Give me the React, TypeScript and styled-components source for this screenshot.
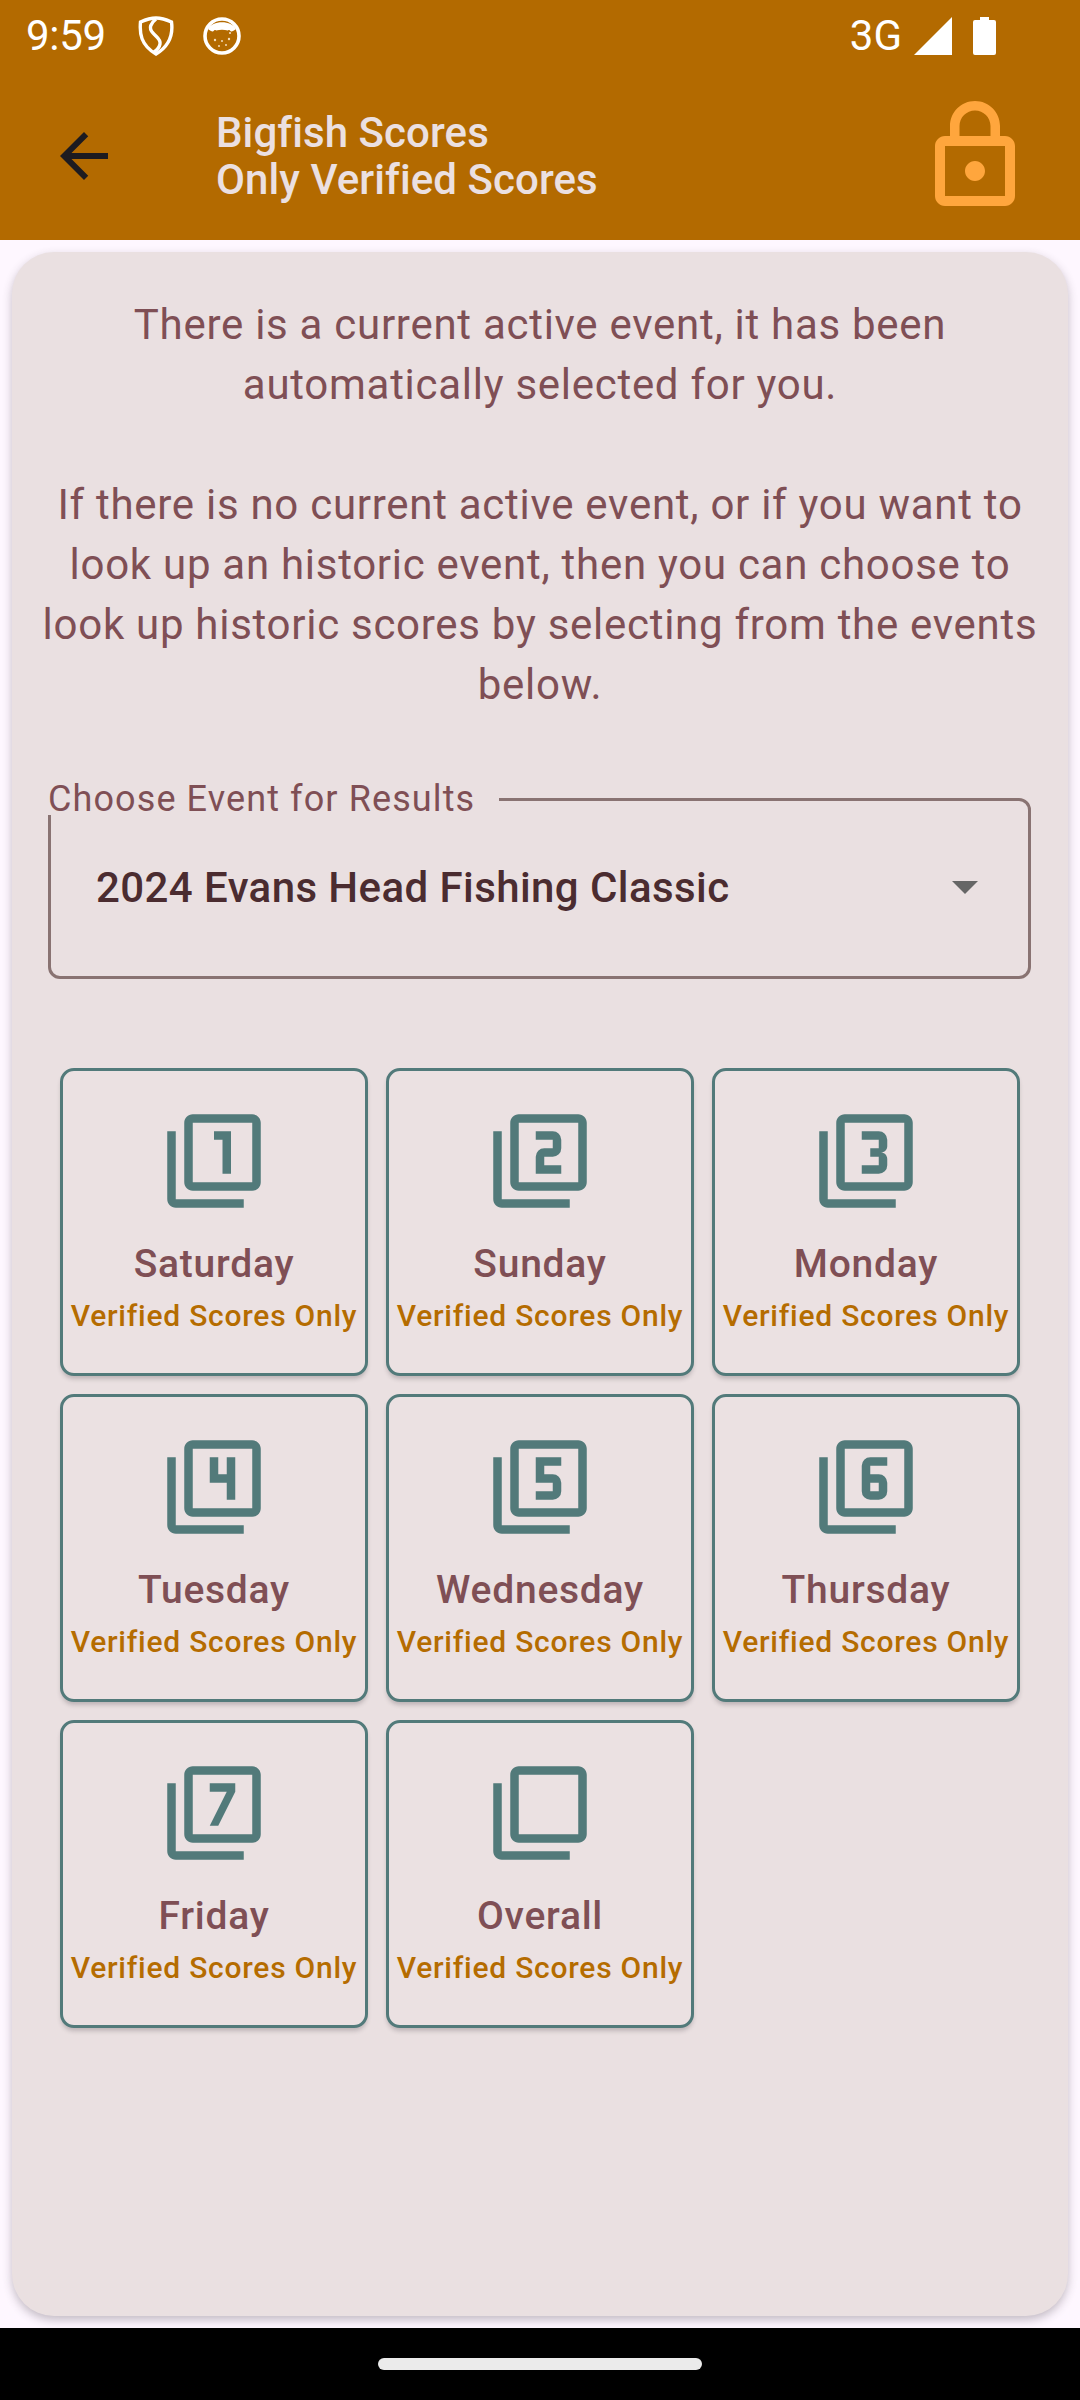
import React from 'react';
import styled, { createGlobalStyle } from 'styled-components';
import { MdArrowBack, MdLockOutline, MdFilter1, MdFilter2, MdFilter3, MdFilter4, MdFilter5, MdFilter6, MdFilter7, MdFilterNone } from 'react-icons/md';

const Global = createGlobalStyle`
  html, body { margin: 0; padding: 0; background: #FEF7FF; }
  * { box-sizing: border-box; }
`;

const Screen = styled.div`
  width: 1080px; height: 2400px; display: flex; flex-direction: column;
  font-family: Roboto, "Noto Sans", sans-serif; background: #FEF7FF; overflow: hidden;
`;
const StatusBar = styled.div`
  height: 72px; background: #B36A00; color: #fff; display: flex; align-items: center;
  padding: 0 84px 0 26px; font-size: 42px; line-height: 72px;
`;
const StatusTime = styled.span` width: 112px; letter-spacing: -0.3px; `;
const StatusGroup = styled.div` display: flex; align-items: center; gap: 29px; flex: 1; `;
const StatusRight = styled.div` display: flex; align-items: center; gap: 12px; `;
const BatteryShape = styled.svg` margin-left: 9px; `;
const AppBar = styled.div`
  height: 168px; background: #B36A00; display: flex; align-items: center; padding: 0 45px 0 48px;
`;
const BackButton = styled.div` width: 72px; height: 72px; color: #1D1B20; display: flex; flex: none; `;
const Titles = styled.div`
  flex: 1; margin-left: 96px; color: #EBE0E1; font-size: 42px; font-weight: 500; line-height: 47px; letter-spacing: 0.08px;
`;
const LockButton = styled.div` width: 120px; height: 120px; color: #FFA63D; display: flex; flex: none; `;
const Main = styled.div` flex: 1; padding: 12px; display: flex; `;
const Panel = styled.div`
  flex: 1; background: #EAE0E1; border-radius: 42px; padding: 43px 24px 0;
  box-shadow: 0 4px 10px rgba(60, 50, 60, 0.3);
`;
const Intro = styled.p`
  margin: 0 0 60px; text-align: center; color: #7F4F55; font-size: 42px; line-height: 60px;
  letter-spacing: 0.72px;
`;
const Field = styled.div`
  position: relative; height: 181px; margin: 83px 13px 0 12px; border: 3px solid #897372; border-radius: 12px;
  display: flex; align-items: center; padding: 0 50px 2px 45px;
`;
const FieldLabel = styled.span`
  position: absolute; left: -3px; top: -16px; width: 451px; height: 30px; background: #EAE0E1;
  color: #7F4F55; font-size: 36px; line-height: 28px; letter-spacing: 1.1px; white-space: nowrap;
`;
const FieldValue = styled.span`
  flex: 1; color: #4B2C30; font-size: 42px; font-weight: 500; letter-spacing: 0.42px;
`;
const Caret = styled.span`
  width: 0; height: 0; border-left: 13px solid transparent; border-right: 13px solid transparent;
  border-top: 13px solid #666;
`;
const Grid = styled.div`
  display: grid; grid-template-columns: repeat(3, 308px); grid-auto-rows: 308px; gap: 18px;
  margin: 89px 0 0 24px;
`;
const DayCard = styled.div`
  background: #EBE1E2; border: 3px solid #527A7A; border-radius: 14px; padding-top: 39px;
  display: flex; flex-direction: column; align-items: center;
  box-shadow: 0 4px 4px -1px rgba(60, 50, 60, 0.25);
`;
const DayIcon = styled.div` width: 102px; height: 102px; color: #527A7A; display: flex; `;
const DayName = styled.div`
  margin-top: 30px; color: #7F4F55; font-size: 39px; font-weight: 500; line-height: 44px; letter-spacing: 0.75px;
`;
const DayNote = styled.div`
  margin-top: 12px; color: #B56C00; font-size: 30px; font-weight: 500; line-height: 36px; letter-spacing: 0.75px;
  white-space: nowrap;
`;
const NavBar = styled.div` height: 72px; background: #000; display: flex; justify-content: center; padding-top: 30px; `;
const HomePill = styled.div` width: 324px; height: 12px; border-radius: 6px; background: #EBEBEB; `;

const days = [
  ['Saturday', MdFilter1], ['Sunday', MdFilter2], ['Monday', MdFilter3], ['Tuesday', MdFilter4],
  ['Wednesday', MdFilter5], ['Thursday', MdFilter6], ['Friday', MdFilter7], ['Overall', MdFilterNone],
] as const;

const Shield = () => (
  <svg width="36" height="40" viewBox="0 0 36 40" fill="none" stroke="#fff" strokeWidth="3.4">
    <path d="M18 2C13 2 8 3.500 2.500 6c-1 11 0 23 15.500 32C33 29 35 17 33.500 6 28 3.500 23 2 18 2z" />
    <path d="M18 3c-5 4-8 9-3 14 3 4 8 6 7 11-.5 3-3 6-6 8" />
  </svg>
);
const Bubble = () => (
  <svg width="38" height="38" viewBox="0 0 38 38">
    <circle cx="19" cy="19" r="17" fill="none" stroke="#fff" strokeWidth="3.6" />
    <path d="M5 12C9 3 29 3 33 12c-2 1.500-4 3-5 2.500-1-1-2-2-3-1-4-1-8-1-12 0-1-1-2 0-3 1-1 .5-3-1-5-2.500z" fill="#fff" />
    <g fill="#F3DDBB">
      <circle cx="12" cy="23" r="1.200" /><circle cx="19" cy="24" r="1" /><circle cx="26" cy="22" r="1.200" />
      <circle cx="16" cy="29" r="1" /><circle cx="23" cy="28" r="1" /><circle cx="27" cy="16" r="1.100" />
    </g>
  </svg>
);
const Signal = () => (
  <svg width="38" height="38" viewBox="0 0 38 38"><path d="M38 0v38H0z" fill="#fff" /></svg>
);
const Battery = () => (
  <BatteryShape width="23" height="38" viewBox="0 0 23 38">
    <path d="M7 0h9v3h5a2 2 0 0 1 2 2v31a2 2 0 0 1-2 2H2a2 2 0 0 1-2-2V5a2 2 0 0 1 2-2h5z" fill="#fff" />
  </BatteryShape>
);

export default function App() {
  return (
    <Screen>
      <Global />
      <StatusBar>
        <StatusTime>9:59</StatusTime>
        <StatusGroup><Shield /><Bubble /></StatusGroup>
        <StatusRight><span>3G</span><Signal /><Battery /></StatusRight>
      </StatusBar>
      <AppBar>
        <BackButton><MdArrowBack size={72} /></BackButton>
        <Titles>Bigfish Scores<br />Only Verified Scores</Titles>
        <LockButton><MdLockOutline size={120} /></LockButton>
      </AppBar>
      <Main>
        <Panel>
          <Intro>There is a current active event, it has been automatically selected for you.</Intro>
          <Intro>If there is no current active event, or if you want to look up an historic event, then you can choose to look up historic scores by selecting from the events below.</Intro>
          <Field>
            <FieldLabel>Choose Event for Results</FieldLabel>
            <FieldValue>2024 Evans Head Fishing Classic</FieldValue>
            <Caret />
          </Field>
          <Grid>
            {days.map(([name, Icon]) => (
              <DayCard key={name}>
                <DayIcon><Icon size={102} /></DayIcon>
                <DayName>{name}</DayName>
                <DayNote>Verified Scores Only</DayNote>
              </DayCard>
            ))}
          </Grid>
        </Panel>
      </Main>
      <NavBar><HomePill /></NavBar>
    </Screen>
  );
}
